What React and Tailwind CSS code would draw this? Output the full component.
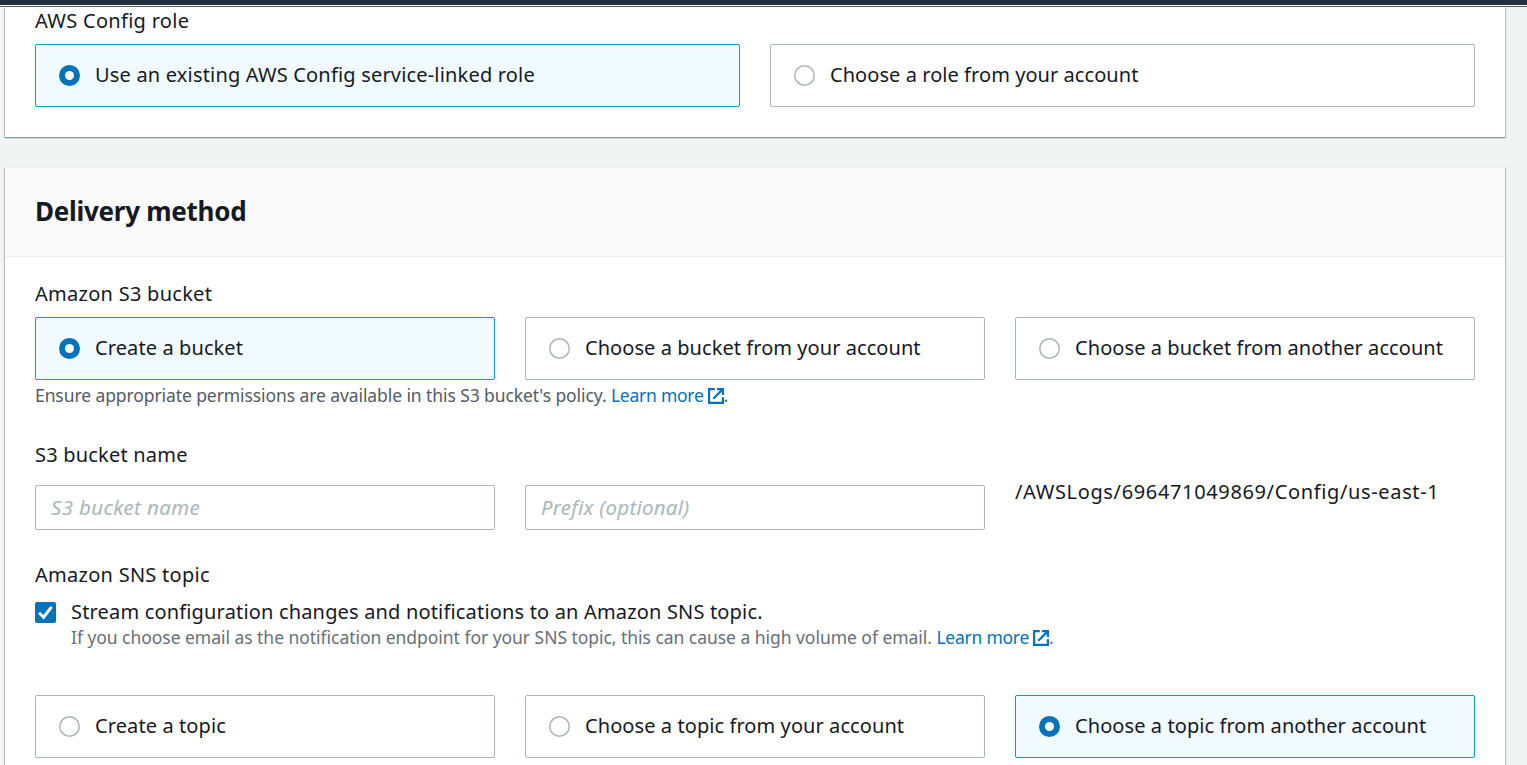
import React from "react";

function Radio({ checked }) {
  return checked ? (
    <svg className="block h-[21px] w-[21px] shrink-0" viewBox="0 0 21 21">
      <circle cx="10.5" cy="10.5" r="10.5" fill="#0073bb" />
      <circle cx="10.5" cy="10.5" r="4.5" fill="#fff" />
    </svg>
  ) : (
    <svg className="block h-[21px] w-[21px] shrink-0" viewBox="0 0 21 21">
      <circle cx="10.5" cy="10.5" r="9.75" fill="#fff" stroke="#aab7b8" strokeWidth="1.5" />
    </svg>
  );
}

function Tile({ checked, spacing, children }) {
  return (
    <div
      className={
        "flex h-[63px] items-center gap-[15px] rounded-[2px] border pl-[23px] " +
        (checked ? "border-[#00a1c9] bg-[#f1faff]" : "border-[#aab7b8] bg-white")
      }
    >
      <Radio checked={checked} />
      <span className={"-mt-0.5 whitespace-nowrap leading-[30px] " + spacing}>{children}</span>
    </div>
  );
}

function Label({ spacing, children }) {
  return (
    <div className="flex">
      <span className={"whitespace-nowrap leading-[30px] " + spacing}>{children}</span>
    </div>
  );
}

function LearnMore() {
  return (
    <>
      <span className="tracking-[-0.25px] text-[#0073bb]">Learn more</span>
      <svg
        className="ml-1 inline-block h-4 w-4 align-[-2px]"
        viewBox="0 0 16 16"
        fill="none"
        stroke="#0073bb"
        strokeWidth="2.2"
      >
        <path d="M6.8 1.1H1.1v13.8h13.8V9.2" />
        <path d="M9 1.1h5.9V7" />
        <path d="M5.3 10.7 14.6 1.4" />
      </svg>
    </>
  );
}

export default function App() {
  return (
    <div className="flex h-[765px] w-[1527px] flex-col overflow-hidden bg-[#f2f3f3] font-['Noto_Sans',sans-serif] text-[20px] text-[#16191f]">
      <div className="h-[5px] shrink-0 bg-[#232f3e]" />
      <div className="h-px shrink-0 bg-white" />
      <div className="h-px shrink-0 bg-[#545b64]" />
      <div className="flex flex-col gap-[30px] pl-[5px] pr-[22px]">
        <section className="h-[130px] shrink-0 bg-white px-[30px] shadow-[0_1px_0_0_#879596,0_1px_1px_0_rgba(0,28,36,0.4),1px_1px_1px_0_rgba(0,28,36,0.18),-1px_1px_1px_0_rgba(0,28,36,0.18)]">
          <div className="-mt-px">
            <Label spacing="tracking-[0.3px]">AWS Config role</Label>
          </div>
          <div className="mt-[8px] grid grid-cols-2 gap-[30px]">
            <Tile checked spacing="tracking-[0.18px]">Use an existing AWS Config service-linked role</Tile>
            <Tile spacing="tracking-[0.06px]">Choose a role from your account</Tile>
          </div>
        </section>

        <section className="h-[660px] shrink-0 border-t border-[#eaeded] bg-white shadow-[0_1px_0_0_#879596,0_1px_1px_0_rgba(0,28,36,0.4),1px_1px_1px_0_rgba(0,28,36,0.18),-1px_1px_1px_0_rgba(0,28,36,0.18)]">
          <header className="flex h-[89px] items-center border-b border-[#eaeded] bg-[#fafafa] px-[30px] pb-0.5">
            <h2 className="whitespace-nowrap text-[26px] font-bold leading-[40px] tracking-[-0.27px]">Delivery method</h2>
          </header>
          <div className="px-[30px] pt-[22px]">
            <Label spacing="tracking-[0.27px]">Amazon S3 bucket</Label>
            <div className="mt-[8px] grid grid-cols-3 gap-[30px]">
              <Tile checked spacing="tracking-[0.1px]">Create a bucket</Tile>
              <Tile spacing="tracking-[0.06px]">Choose a bucket from your account</Tile>
              <Tile spacing="tracking-[0.07px]">Choose a bucket from another account</Tile>
            </div>
            <p className="mt-[3px] h-[25px] whitespace-nowrap text-[17.5px] leading-[25px] tracking-[-0.09px] text-[#545b64]">
              Ensure appropriate permissions are available in this S3 bucket's policy. <LearnMore />.
            </p>
            <div className="mt-[32px]">
              <Label spacing="tracking-[0.2px]">S3 bucket name</Label>
            </div>
            <div className="mt-[15px] grid grid-cols-3 gap-[30px]">
              <input
                className="h-[45px] rounded-[2px] border border-[#aab7b8] bg-white px-[15px] pb-0.5 text-[20.5px] italic tracking-[0.38px] outline-none placeholder:text-[#aab7b8]"
                placeholder="S3 bucket name"
              />
              <input
                className="h-[45px] rounded-[2px] border border-[#aab7b8] bg-white px-[15px] pb-0.5 text-[20.5px] italic tracking-[0.24px] outline-none placeholder:text-[#aab7b8]"
                placeholder="Prefix (optional)"
              />
              <Label spacing="-mt-[8px] tracking-[0.64px]">/AWSLogs/696471049869/Config/us-east-1</Label>
            </div>
            <div className="mt-[30px]">
              <Label spacing="tracking-[0.27px]">Amazon SNS topic</Label>
            </div>
            <div className="mt-[7px] flex gap-[15px]">
              <svg className="mt-[5px] block h-[21px] w-[21px] shrink-0" viewBox="0 0 21 21">
                <rect width="21" height="21" rx="2" fill="#0073bb" />
                <path d="M4 10.7 8.6 15.2 16.6 4.8" fill="none" stroke="#fff" strokeWidth="3" />
              </svg>
              <div>
                <Label spacing="tracking-[0.17px]">Stream configuration changes and notifications to an Amazon SNS topic.</Label>
                <p className="-mt-0.5 h-[25px] whitespace-nowrap text-[17.5px] leading-[25px] tracking-[-0.038px] text-[#687078]">
                  If you choose email as the notification endpoint for your SNS topic, this can cause a high volume of email. <LearnMore />.
                </p>
              </div>
            </div>
            <div className="mt-[45px] grid grid-cols-3 gap-[30px]">
              <Tile spacing="tracking-[0.1px]">Create a topic</Tile>
              <Tile spacing="tracking-[0.08px]">Choose a topic from your account</Tile>
              <Tile checked spacing="tracking-[0.08px]">Choose a topic from another account</Tile>
            </div>
          </div>
        </section>
      </div>
    </div>
  );
}
